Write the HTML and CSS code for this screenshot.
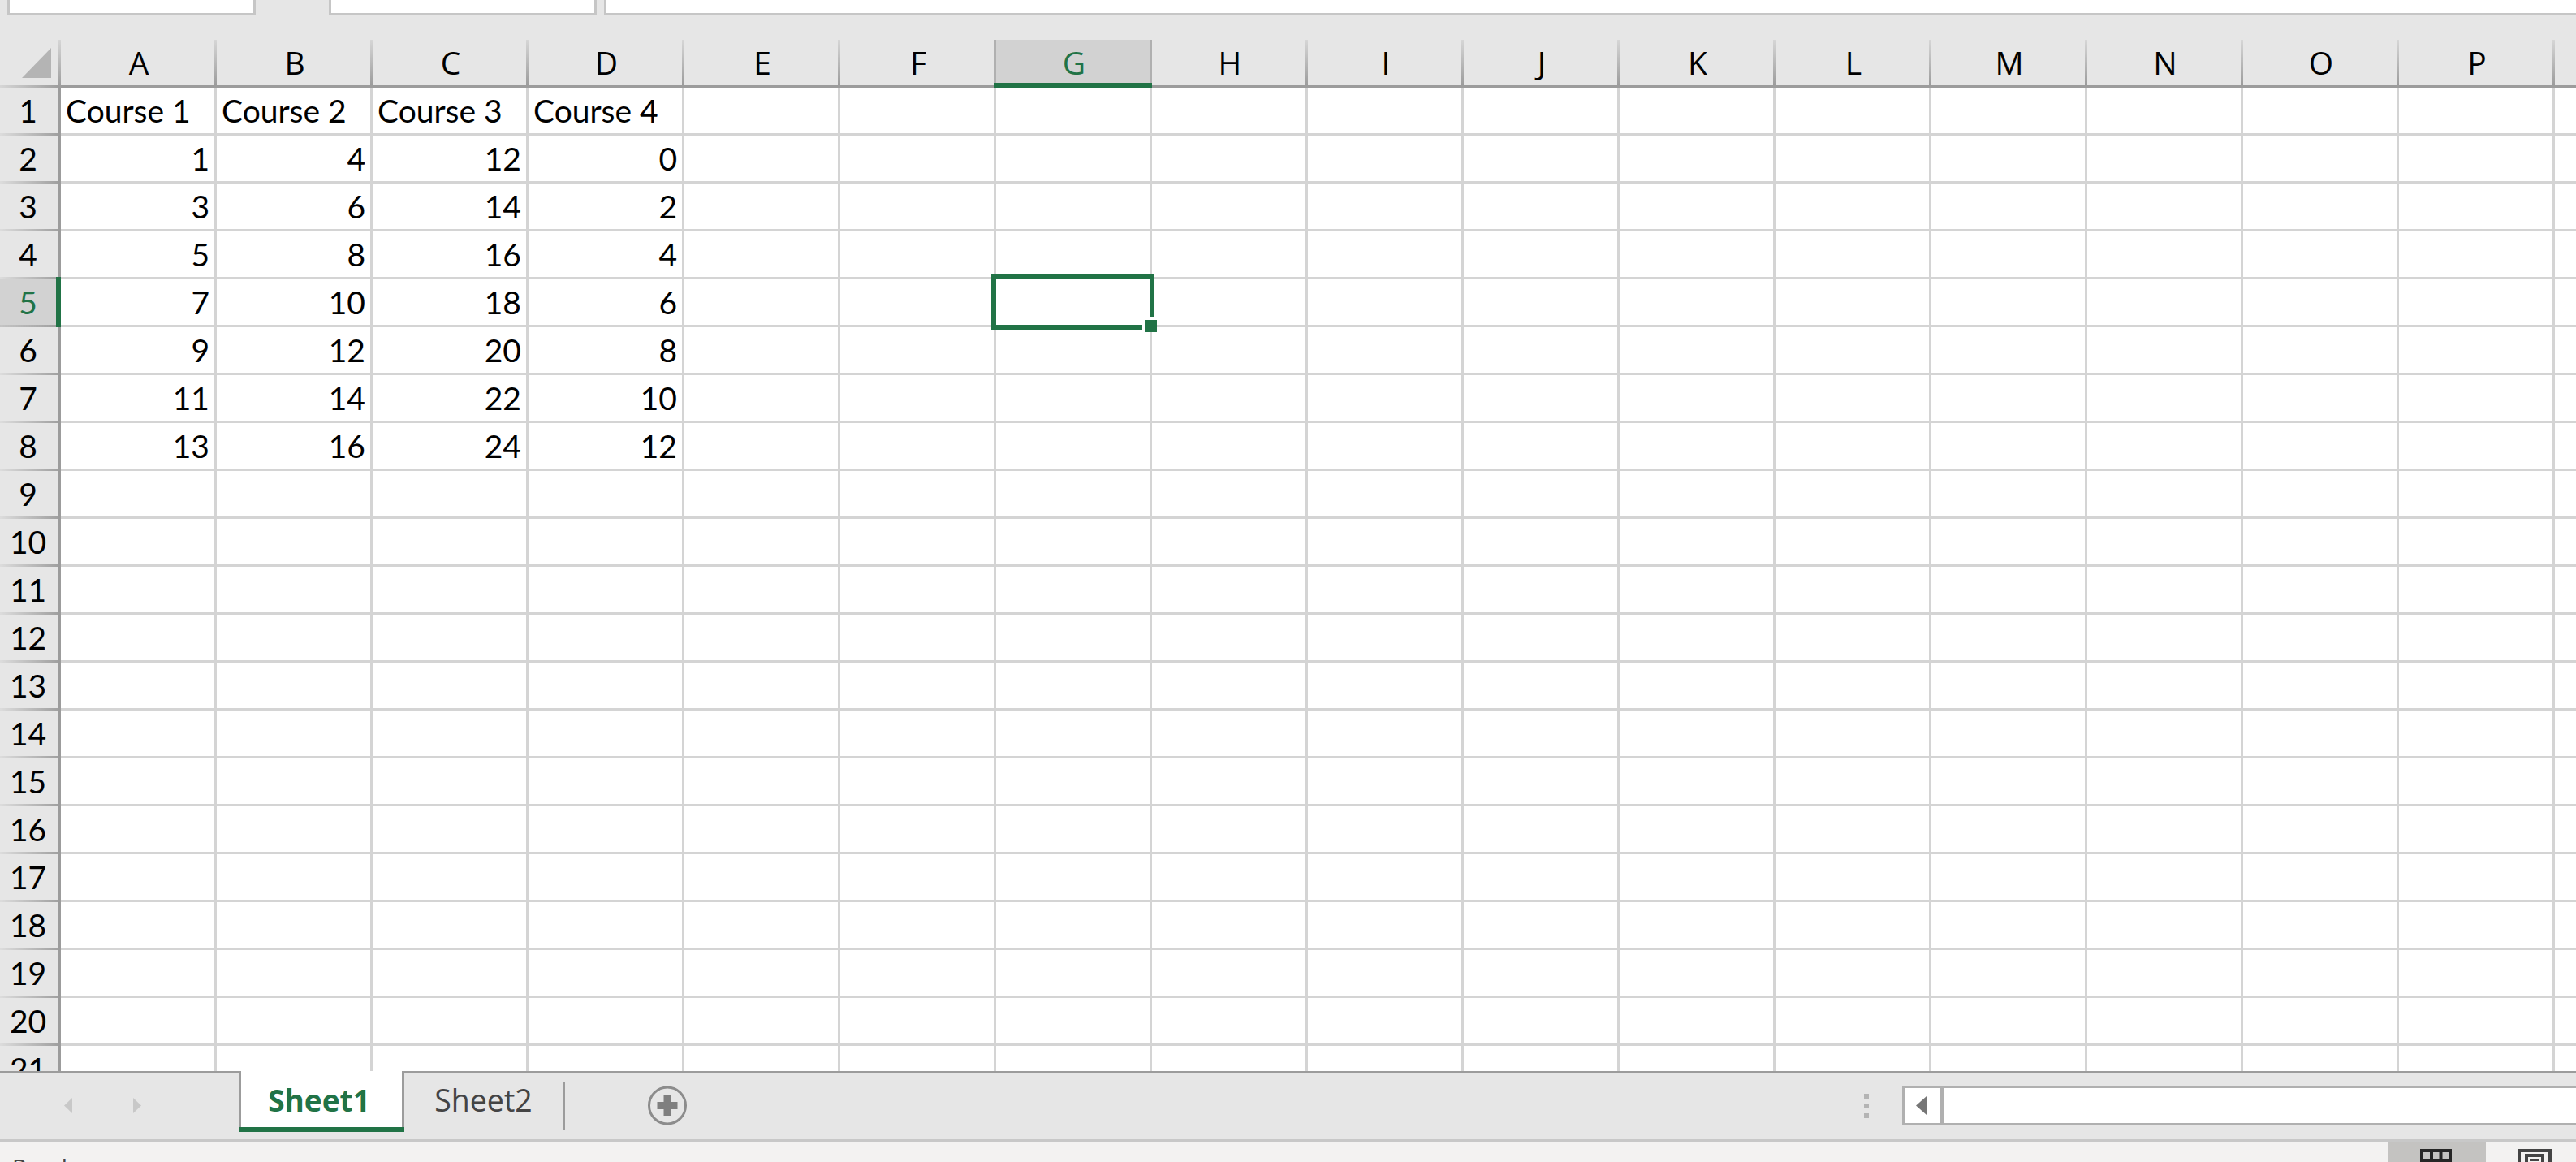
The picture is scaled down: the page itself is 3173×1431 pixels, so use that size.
FILE: index.html
```html
<!DOCTYPE html>
<html lang="en">

<head>
    <meta charset="UTF-8">
    <title>Book1 - Excel</title>
    <link rel="stylesheet" href="styles.css">
</head>

<body>
    <div class="window">
        <div class="formula-bar">
            <div class="name-box"></div>
            <div class="fx-box"></div>
            <div class="input-box"></div>
        </div>

        <div class="sheet">
            <div class="col-heads">
                <div class="corner"><span class="corner-mark"></span></div>
                <div class="col-head">A</div>
                <div class="col-head">B</div>
                <div class="col-head">C</div>
                <div class="col-head">D</div>
                <div class="col-head">E</div>
                <div class="col-head before-active">F</div>
                <div class="col-head active">G</div>
                <div class="col-head">H</div>
                <div class="col-head">I</div>
                <div class="col-head">J</div>
                <div class="col-head">K</div>
                <div class="col-head">L</div>
                <div class="col-head">M</div>
                <div class="col-head">N</div>
                <div class="col-head">O</div>
                <div class="col-head">P</div>
                <div class="col-head"></div>
            </div>

            <div class="row">
                <div class="row-head">1</div>
                <div class="cells">
                    <div class="cell">Course 1</div>
                    <div class="cell">Course 2</div>
                    <div class="cell">Course 3</div>
                    <div class="cell">Course 4</div>
                </div>
            </div>
            <div class="row">
                <div class="row-head">2</div>
                <div class="cells">
                    <div class="cell num">1</div>
                    <div class="cell num">4</div>
                    <div class="cell num">12</div>
                    <div class="cell num">0</div>
                </div>
            </div>
            <div class="row">
                <div class="row-head">3</div>
                <div class="cells">
                    <div class="cell num">3</div>
                    <div class="cell num">6</div>
                    <div class="cell num">14</div>
                    <div class="cell num">2</div>
                </div>
            </div>
            <div class="row">
                <div class="row-head">4</div>
                <div class="cells">
                    <div class="cell num">5</div>
                    <div class="cell num">8</div>
                    <div class="cell num">16</div>
                    <div class="cell num">4</div>
                </div>
            </div>
            <div class="row">
                <div class="row-head active">5</div>
                <div class="cells">
                    <div class="cell num">7</div>
                    <div class="cell num">10</div>
                    <div class="cell num">18</div>
                    <div class="cell num">6</div>
                </div>
            </div>
            <div class="row">
                <div class="row-head">6</div>
                <div class="cells">
                    <div class="cell num">9</div>
                    <div class="cell num">12</div>
                    <div class="cell num">20</div>
                    <div class="cell num">8</div>
                </div>
            </div>
            <div class="row">
                <div class="row-head">7</div>
                <div class="cells">
                    <div class="cell num">11</div>
                    <div class="cell num">14</div>
                    <div class="cell num">22</div>
                    <div class="cell num">10</div>
                </div>
            </div>
            <div class="row">
                <div class="row-head">8</div>
                <div class="cells">
                    <div class="cell num">13</div>
                    <div class="cell num">16</div>
                    <div class="cell num">24</div>
                    <div class="cell num">12</div>
                </div>
            </div>
            <div class="row"><div class="row-head">9</div><div class="cells"></div></div>
            <div class="row"><div class="row-head">10</div><div class="cells"></div></div>
            <div class="row"><div class="row-head">11</div><div class="cells"></div></div>
            <div class="row"><div class="row-head">12</div><div class="cells"></div></div>
            <div class="row"><div class="row-head">13</div><div class="cells"></div></div>
            <div class="row"><div class="row-head">14</div><div class="cells"></div></div>
            <div class="row"><div class="row-head">15</div><div class="cells"></div></div>
            <div class="row"><div class="row-head">16</div><div class="cells"></div></div>
            <div class="row"><div class="row-head">17</div><div class="cells"></div></div>
            <div class="row"><div class="row-head">18</div><div class="cells"></div></div>
            <div class="row"><div class="row-head">19</div><div class="cells"></div></div>
            <div class="row"><div class="row-head">20</div><div class="cells"></div></div>
            <div class="row"><div class="row-head">21</div><div class="cells"></div></div>

            <div class="selection"><span class="fill-handle"></span></div>
        </div>

        <div class="tab-bar">
            <div class="tab-nav">
                <svg class="nav-arrow" width="10" height="19" viewBox="0 0 10 19"><path d="M10 0V19L0 9.5Z" /></svg>
                <svg class="nav-arrow" width="10" height="19" viewBox="0 0 10 19"><path d="M0 0V19L10 9.5Z" /></svg>
            </div>
            <div class="tab current">Sheet1</div>
            <div class="tab">Sheet2</div>
            <div class="tab-sep"></div>
            <svg class="add-sheet" width="48" height="49" viewBox="0 0 48 49">
                <circle cx="24" cy="24.5" r="22.5" fill="none" stroke="#8c8c8c" stroke-width="3" />
                <path d="M19.5 12h9v8h8v9h-8v8h-9v-8h-8v-9h8z" fill="#7f7f7f" />
            </svg>
            <div class="split-dots"><span></span><span></span><span></span></div>
            <div class="hscroll">
                <div class="hscroll-btn">
                    <svg width="13" height="23" viewBox="0 0 13 23"><path d="M13 0V23L0 11.5Z" fill="#767676" /></svg>
                </div>
            </div>
        </div>

        <div class="status-bar">
            <div class="status-text">Ready</div>
            <div class="view-btn active">
                <svg width="39" height="39" viewBox="0 0 39 39">
                    <path d="M2 2H37V37H2ZM14 2V37M25.500 2V37M2 14H37M2 25.500H37" fill="none" stroke="#262626" stroke-width="4" />
                </svg>
            </div>
            <div class="view-btn">
                <svg width="42" height="39" viewBox="0 0 42 39">
                    <path d="M2 2H40V37H2ZM11 8H31V37H11Z" fill="none" stroke="#444" stroke-width="4" />
                    <path d="M15 12H27V15H15Z" fill="#444" />
                </svg>
            </div>
        </div>
    </div>
</body>

</html>
```

FILE: styles.css
```css
body {
    margin: 0;
    background-color: #e6e6e6;
    overflow: hidden;
}

.window {
    display: flex;
    flex-direction: column;
    width: 100vw;
    height: 100vh;
    overflow: hidden;
    font-family: Lato, "Open Sans", sans-serif;
    color: #000;
}

/* formula bar, only its bottom edge is in view */
.formula-bar {
    display: flex;
    flex: none;
    height: 49px;
    padding-left: 9px;
    box-sizing: border-box;
}

.name-box,
.fx-box,
.input-box {
    height: 19px;
    box-sizing: border-box;
    background-color: #fff;
    border: 3px solid #c6c6c6;
    border-top: none;
}

.name-box {
    width: 306px;
}

.fx-box {
    width: 330px;
    margin-left: 90px;
}

.input-box {
    flex: 1;
    margin-left: 9px;
    border-right: none;
}

/* grid */
.sheet {
    position: relative;
    flex: 1;
    min-height: 0;
    overflow: hidden;
}

.col-heads {
    display: flex;
    height: 59px;
}

.corner {
    flex: none;
    width: 75px;
    height: 59px;
    box-sizing: border-box;
    padding: 10px 12px 12px 27px;
    background:
        linear-gradient(#d6d6d6, #9c9c9c) right top / 3px 100% no-repeat,
        linear-gradient(to right, #d6d6d6, #9c9c9c) left bottom / 100% 3px no-repeat;
}

.corner-mark {
    display: block;
    width: 36px;
    height: 37px;
    background-color: #b4b4b4;
    clip-path: polygon(100% 0, 100% 100%, 0 100%);
}

.col-head {
    position: relative;
    flex: none;
    width: 192px;
    height: 59px;
    box-sizing: border-box;
    border-bottom: 3px solid #9c9c9c;
    background: linear-gradient(#d6d6d6, #9c9c9c) right top / 3px 100% no-repeat;
    font-family: "Open Sans", sans-serif;
    font-size: 39px;
    line-height: 56px;
    text-align: center;
}

.col-head.before-active {
    background: linear-gradient(#b0b0b0, #b0b0b0) right top / 3px 100% no-repeat;
}

.col-head.active {
    background: linear-gradient(#b0b0b0, #b0b0b0) right top / 3px 100% no-repeat, #d2d2d2;
    color: #217346;
}

.col-head.active::after {
    content: "";
    position: absolute;
    left: -3px;
    right: 0;
    bottom: -3px;
    height: 6px;
    background-color: #217346;
}

.row {
    display: flex;
    height: 59px;
}

.row-head {
    position: relative;
    flex: none;
    width: 75px;
    height: 59px;
    box-sizing: border-box;
    padding-right: 3px;
    border-right: 3px solid #9c9c9c;
    background: linear-gradient(to right, #dcdcdc, #a0a0a0) left bottom / 100% 3px no-repeat;
    font-size: 39px;
    line-height: 56px;
    text-align: center;
}

.row-head.active {
    background: linear-gradient(to right, #c4c4c4, #a0a0a0) left bottom / 100% 3px no-repeat, #d2d2d2;
    color: #217346;
}

.row-head.active::after {
    content: "";
    position: absolute;
    top: -3px;
    right: -3px;
    bottom: 0;
    width: 6px;
    background-color: #217346;
}

.cells {
    display: flex;
    flex: 1;
    box-sizing: border-box;
    border-bottom: 3px solid #d4d4d4;
    background-color: #fff;
    background-image: repeating-linear-gradient(to right, transparent 0 189px, #d4d4d4 189px 192px);
}

.cell {
    flex: none;
    width: 192px;
    box-sizing: border-box;
    padding: 0 6px;
    font-size: 39px;
    line-height: 56px;
    white-space: nowrap;
}

.cell.num {
    padding-right: 9px;
    text-align: right;
}

.selection {
    position: absolute;
    left: 1221px;
    top: 289px;
    width: 201px;
    height: 68px;
    box-sizing: border-box;
    border: 6px solid #217346;
}

.fill-handle {
    position: absolute;
    right: -9px;
    bottom: -9px;
    width: 18px;
    height: 18px;
    box-sizing: border-box;
    background-color: #217346;
    border-left: 3px solid #fff;
    border-top: 3px solid #fff;
}

/* sheet tabs */
.tab-bar {
    display: flex;
    flex: none;
    align-items: center;
    height: 87px;
    box-sizing: border-box;
    padding-bottom: 2px;
    border-top: 3px solid #9c9c9c;
    border-bottom: 3px solid #c8c8c8;
    font-family: "Open Sans", sans-serif;
}

.tab-nav {
    display: flex;
    flex: none;
    gap: 75px;
    width: 294px;
    box-sizing: border-box;
    padding-left: 79px;
}

.nav-arrow {
    fill: #c8c8c8;
}

.tab {
    align-self: flex-start;
    flex: none;
    width: 195px;
    height: 66px;
    font-size: 37.500px;
    line-height: 66px;
    text-align: center;
    color: #444;
}

.tab.current {
    width: 204px;
    height: 69px;
    margin-top: -3px;
    box-sizing: border-box;
    padding-right: 6px;
    border-left: 3px solid #9c9c9c;
    border-right: 3px solid #9c9c9c;
    background-color: #fff;
    box-shadow: 0 6px 0 #217346;
    font-size: 37px;
    font-weight: bold;
    line-height: 71px;
    color: #217346;
}

.tab-sep {
    flex: none;
    width: 3px;
    height: 60px;
    background-color: #9c9c9c;
}

.add-sheet {
    flex: none;
    margin-left: 102px;
}

.split-dots {
    display: flex;
    flex: none;
    flex-direction: column;
    gap: 6px;
    margin-left: 1450px;
}

.split-dots span {
    width: 6px;
    height: 6px;
    background-color: #b4b4b4;
}

.hscroll {
    flex: none;
    width: 830px;
    height: 49px;
    margin-left: 41px;
    box-sizing: border-box;
    background-color: #fff;
    border: 3px solid #b0b0b0;
    border-right: none;
}

.hscroll-btn {
    display: flex;
    align-items: center;
    width: 49px;
    height: 100%;
    box-sizing: border-box;
    padding-left: 14px;
    border-right: 6px solid #b0b0b0;
}

/* status bar, cut off by the window edge */
.status-bar {
    display: flex;
    flex: none;
    height: 25px;
    overflow: hidden;
    background-color: #f3f2f1;
}

.status-text {
    flex: none;
    width: 2942px;
    box-sizing: border-box;
    padding-left: 15px;
    font-family: "Open Sans", sans-serif;
    font-size: 29px;
    line-height: 40px;
    margin-top: 12px;
    color: #444;
}

.view-btn {
    flex: none;
    width: 120px;
    box-sizing: border-box;
    padding: 9px 0 0 39px;
}

.view-btn.active {
    background-color: #c4c3c1;
}

.view-btn svg {
    display: block;
}
```
